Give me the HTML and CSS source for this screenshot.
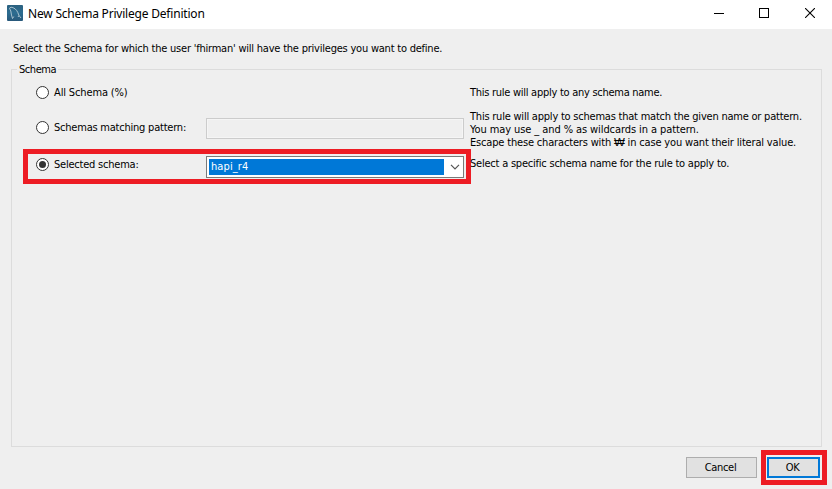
FILE: index.html
```html
<!DOCTYPE html>
<html lang="en">
<head>
<meta charset="utf-8">
<title>New Schema Privilege Definition</title>
<link rel="stylesheet" href="styles.css">
</head>
<body>
<div class="window">
  <header class="titlebar">
    <svg class="app-icon" width="16" height="16" viewBox="0 0 16 16">
      <defs><linearGradient id="sea" x1="0" y1="0" x2="0" y2="1"><stop offset="0" stop-color="#2b6180"/><stop offset=".5" stop-color="#2c6c90"/><stop offset="1" stop-color="#28587a"/></linearGradient></defs>
      <rect width="16" height="16" rx="1" fill="url(#sea)"/>
      <path d="M5.5 13.5 4.5 10 3.8 6 2.5 3.2 4 2.2C7 2.5 9.5 4.5 10.8 7.5L12 10.5 14 13M5.5 13.5 6.8 11.5M12 10.5 11 12" fill="none" stroke="#b4cbd6" stroke-width=".9"/>
    </svg>
    <h1 class="title">New Schema Privilege Definition</h1>
    <div class="controls">
      <svg class="nudge" width="10" height="10" viewBox="0 0 10 10" shape-rendering="crispEdges"><path d="M0 5.5H10" stroke="#000"/></svg>
      <svg class="nudge" width="10" height="10" viewBox="0 0 10 10" shape-rendering="crispEdges"><path d="M.5 .5H9.5V9.5H.5Z" fill="none" stroke="#000"/></svg>
      <svg width="10" height="10" viewBox="0 0 10 10"><path d="M0 0 10 10M10 0 0 10" stroke="#000" stroke-width="1.1"/></svg>
    </div>
  </header>
  <p class="intro">Select the Schema for which the user 'fhirman' will have the privileges you want to define.</p>
  <fieldset class="group">
    <legend>Schema</legend>
    <div class="row row-all">
      <label class="option"><span class="radio"></span><span class="t-all">All Schema (%)</span></label>
      <span></span>
      <p class="hint h-all">This rule will apply to any schema name.</p>
    </div>
    <div class="row row-pattern">
      <label class="option"><span class="radio"></span><span>Schemas matching pattern:</span></label>
      <span class="field disabled"></span>
      <p class="hint"><span>This rule will apply to schemas that match the given name or pattern.</span><br><span class="h-p2">You may use _ and % as wildcards in a pattern.</span><br><span class="h-p3">Escape these characters with <span class="won">₩</span> in case you want their literal value.</span></p>
    </div>
    <div class="row row-selected">
      <label class="option"><span class="radio checked"></span><span>Selected schema:</span></label>
      <span class="field combo"><span class="value">hapi_r4</span>
        <svg width="10" height="6" viewBox="0 0 10 6"><path d="M1 .8 5 4.8 9 .8" fill="none" stroke="#555" stroke-width="1.2"/></svg>
      </span>
      <p class="hint">Select a specific schema name for the rule to apply to.</p>
      <span class="mark mark-row"></span>
    </div>
  </fieldset>
  <footer class="actions">
    <button class="btn">Cancel</button>
    <button class="btn primary">OK<span class="mark mark-ok"></span></button>
  </footer>
</div>
</body>
</html>
```
FILE: styles.css
```css
* { box-sizing: border-box; }
body { margin: 0; font: 11px/13px "DejaVu Sans Condensed", "DejaVu Sans", sans-serif; font-stretch: condensed; letter-spacing: -.22px; color: #000; }
p, h1 { margin: 0; font-weight: normal; white-space: nowrap; }
.window { width: 832px; height: 489px; background: #efefef; display: flex; flex-direction: column; overflow: hidden; }
.titlebar { height: 29px; flex: none; background: #fff; display: flex; align-items: center; padding: 0 17px 3px 7px; }
.title { font: 12px/16px "Noto Sans", sans-serif; letter-spacing: -.2px; margin: 1px 0 0 5px; }
.controls { margin-left: auto; display: flex; gap: 35px; }
.controls svg, .app-icon, .combo svg { display: block; }
.controls .nudge { transform: translateX(-1px); }
.intro { margin: 13px 0 0 13px; height: 13px; }
.group { position: relative; margin: 8px 10px 0 11px; padding: 0; height: 384px; border: 1px solid #dcdcdc; min-width: 0; flex: none; }
.group legend { margin-left: 5px; padding: 0 2px; height: 13px; letter-spacing: -.45px; }
.row { display: grid; grid-template-columns: 170px 258px 1fr; margin-left: 24px; align-items: start; position: relative; }
.row-all { height: 34px; padding-top: 10px; }
.row-pattern { height: 47px; }
.hint { padding-left: 6px; position: relative; z-index: 2; }
.t-all { letter-spacing: -.14px; }
.h-all { letter-spacing: -.27px; }
.h-p2 { letter-spacing: -.09px; }
.h-p3 { letter-spacing: -.17px; }
.option { display: flex; align-items: center; gap: 5px; height: 13px; white-space: nowrap; }
.radio { width: 13px; height: 13px; border: 1px solid #333; border-radius: 50%; background: #fff; flex: none; display: flex; }
.checked::after { content: ""; width: 7px; height: 7px; margin: 2px; border-radius: 50%; background: #333; }
.row-pattern .option { margin-top: 11px; }
.field { height: 21px; }
.disabled { margin-top: 8px; border: 1px solid #ccc; box-shadow: inset 0 0 0 1px #f5f5f5; }
.row-selected .option { margin-top: 1px; }
.combo { height: 22px; margin-top: -1px; border: 1px solid #7a7a7a; background: #fff; padding: 2px; display: flex; align-items: center; }
.value { background: #0078d7; color: #fff; width: 235px; height: 16px; line-height: 16px; padding-left: 2px; letter-spacing: .1px; }
.combo svg { margin-left: 6px; }
.mark { position: absolute; border: 5px solid #ed1c24; pointer-events: none; }
.mark-row { left: -13px; top: -8px; width: 448px; height: 35px; }
.actions { display: flex; justify-content: flex-end; gap: 10px; padding: 10px 12px 0 0; }
.btn { position: relative; width: 71px; height: 21px; padding: 0 2px 0 0; font: inherit; letter-spacing: -.3px; color: #000; background: #e1e1e1; border: 1px solid #adadad; }
.primary { width: 53px; border: 2px solid #0078d7; }
.mark-ok { left: -8px; top: -9px; width: 66px; height: 35px; }
.won { font-family: "Liberation Sans", sans-serif; font-size: 11.5px; line-height: 1; }
```
